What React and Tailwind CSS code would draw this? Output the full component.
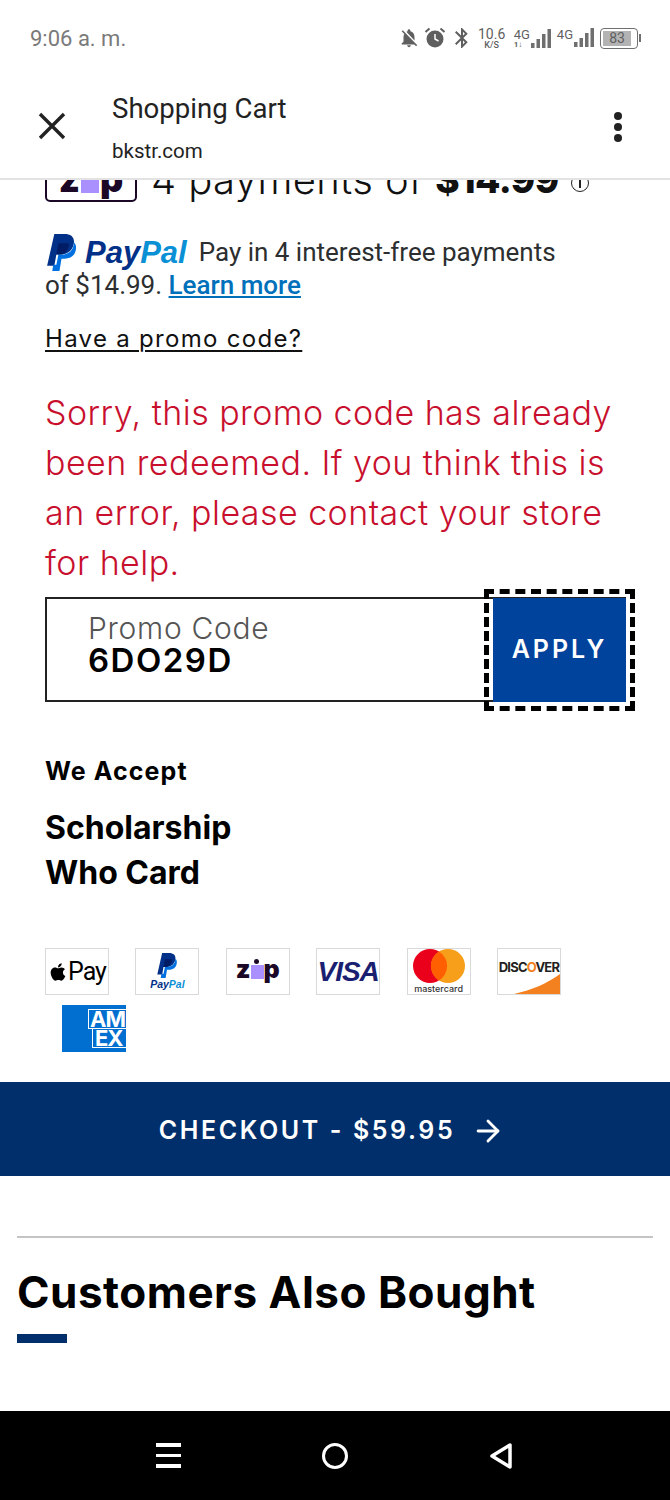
import { MdNotificationsOff, MdBluetooth } from 'react-icons/md';
import { FaApple } from 'react-icons/fa';
import { ArrowRight } from 'lucide-react';

const PayPalMark = ({ className }) => (
  <svg className={className} viewBox="0 0 28 36">
    <path fill="#003087" d="M7 0h10c6 0 10 3 9 9-1 7-6 11-13 11H9L7 31H0z" />
    <path fill="#0070e0" d="M26 8c2 2 2.500 4 2 7-1 6-5 9-11 9h-3l-2 12H5l1-6h3l2-10h3c7 0 12-4 12-12z" />
    <path fill="#001c64" d="M9 20l2-11h10c1 4-3 11-8 11z" />
  </svg>
);

const Bars = () => (
  <svg width="20" height="20" viewBox="0 0 20 20" fill="#6f6f6f">
    <rect x="0" y="14" width="3.500" height="5" />
    <rect x="5.500" y="10" width="3.500" height="9" />
    <rect x="11" y="5" width="3.500" height="14" />
    <rect x="16.500" y="0" width="3.500" height="19" />
  </svg>
);

const StatusBar = () => (
  <div className="h-[76px] flex items-center justify-between pl-[30px] pr-[29px] text-[#7a7a7a] font-['Roboto',sans-serif]">
    <span className="text-[22px]">9:06 a. m.</span>
    <div className="flex items-center text-[#5f5f5f]">
      <MdNotificationsOff className="text-[22px] mr-[4px]" />
      <svg width="22" height="22" viewBox="0 0 22 22" className="mr-[4px]">
        <circle cx="11" cy="12" r="8.500" fill="#5f5f5f" />
        <path d="M11 7v5l3.500 2" stroke="#fff" strokeWidth="1.500" fill="none" />
        <path d="M1.500 5l4-3.500M20.500 5l-4-3.500" stroke="#5f5f5f" strokeWidth="2" />
      </svg>
      <MdBluetooth className="text-[24px] mr-[4px]" />
      <div className="flex flex-col items-center w-[28px] leading-none mr-[8px]">
        <span className="text-[14px]">10.6</span>
        <span className="text-[9px] font-medium">K/S</span>
      </div>
      <div className="flex items-end mr-[6px]">
        <div className="flex flex-col leading-none text-[13px] mr-[1px]">
          <span>4G</span>
          <span className="text-[8px] font-bold">1↓</span>
        </div>
        <Bars />
      </div>
      <div className="flex items-end mr-[6px]">
        <span className="text-[13px] leading-none self-start mr-[1px]">4G</span>
        <Bars />
      </div>
      <div className="w-[38px] h-[21px] border-[1.500px] border-[#6f6f6f] rounded-[4px] p-[2px]">
        <div className="h-full w-[28px] bg-[#b3b3b3] flex items-center justify-center text-[14px] leading-none">
          83
        </div>
      </div>
      <div className="w-[2px] h-[8px] bg-[#6f6f6f] ml-[1px]" />
    </div>
  </div>
);

const Header = () => (
  <div className="h-[104px] flex items-center border-b-2 border-[#e3e3e3] font-['Roboto',sans-serif] text-[#222]">
    <svg width="28" height="28" viewBox="0 0 28 28" className="ml-[38px] mr-[46px] mt-[-2px] shrink-0" stroke="#222" strokeWidth="3.400">
      <path d="M2 2l24 24M26 2L2 26" />
    </svg>
    <div className="flex flex-col flex-1 mt-[1px]">
      <span className="text-[27.600px] leading-[34px]">Shopping Cart</span>
      <span className="text-[20.500px] leading-[26px] mt-[12px]">bkstr.com</span>
    </div>
    <div className="flex flex-col gap-[3px] mr-[48px]">
      <div className="w-[8px] h-[8px] rounded-full bg-[#222]" />
      <div className="w-[8px] h-[8px] rounded-full bg-[#222]" />
      <div className="w-[8px] h-[8px] rounded-full bg-[#222]" />
    </div>
  </div>
);

const ZipRow = () => (
  <div className="h-[22px] overflow-hidden flex items-end pl-[45px] font-['Inter',sans-serif]">
    <div className="w-[92px] h-[40px] border-2 border-[#1a0826] rounded-[5px] flex items-center justify-center shrink-0 text-[36px] font-black leading-none text-[#1a0826]">
      <span className="relative top-[-3px]">z</span>
      <span className="w-[18px] h-[22px] bg-[#aa8fff] mx-[1px]" />
      <span className="relative top-[-3px]">p</span>
    </div>
    <div className="h-[50px] ml-[14px] flex items-center text-[40px] font-light tracking-[0.400px] text-[#111] whitespace-nowrap leading-[50px] relative top-[3px]">
      4 payments of <span className="font-extrabold text-[37px] tracking-[-0.500px] ml-[12px]">$14.99</span>
    </div>
    <div className="w-[18px] h-[18px] rounded-full border border-[#222] ml-[12px] mb-[10px] shrink-0 flex items-center justify-center">
      <div className="w-[2px] h-[9px] bg-[#222]" />
    </div>
  </div>
);

const PayPalPromo = () => (
  <div className="pl-[45px] pt-[31px] font-['Roboto',sans-serif] text-[26px] leading-[34px] text-[#2c2e2f]">
    <div className="flex items-center h-[38px]">
      <PayPalMark className="w-[29px] h-[37px] ml-[2px] mr-[9px] shrink-0" />
      <span className="font-['Liberation_Sans',sans-serif] font-bold italic text-[31px] leading-none text-[#003087] mr-[12px]">
        Pay<span className="text-[#0a90d4]">Pal</span>
      </span>
      <span>Pay in 4 interest-free payments</span>
    </div>
    <div className="mt-[-3px]">
      of $14.99. <span className="text-[#0070ba] font-medium underline underline-offset-2">Learn more</span>
    </div>
  </div>
);

const PromoForm = () => (
  <div className="font-['Inter',sans-serif]">
    <div className="pl-[45px] pt-[22px] text-[24px] tracking-[1.300px] leading-[30px] text-[#111] underline underline-offset-[3px]">
      Have a promo code?
    </div>
    <p className="pl-[45px] pr-[40px] pt-[34px] text-[34px] tracking-[0.450px] font-light leading-[50px] text-[#c8102e]">
      Sorry, this promo code has already been redeemed. If you think this is an error, please contact your store for help.
    </p>
    <div className="flex ml-[45px] mr-[44px] mt-[9px] h-[105px] border-2 border-[#222] border-r-0">
      <div className="flex-1 flex flex-col pl-[41px] pt-[14px]">
        <span className="text-[30px] tracking-[0.700px] font-light leading-[30px] text-[#555]">Promo Code</span>
        <span className="text-[33px] tracking-[1.500px] font-semibold leading-[34px] text-black">6DO29D</span>
      </div>
      <div className="w-[133px] bg-[#00439c] mt-[-1px] mb-[-2px] flex items-center justify-center text-white text-[25px] font-semibold tracking-[3px] outline-[5px] outline-dashed outline-black outline-offset-[4px]">
        APPLY
      </div>
    </div>
  </div>
);

const Card = ({ children, className = '' }) => (
  <div className={`w-[64px] h-[47px] border border-[#d9d9d9] flex items-center justify-center overflow-hidden ${className}`}>
    {children}
  </div>
);

const PaymentCards = () => (
  <div className="flex flex-wrap pl-[45px] pr-[80px] gap-x-[26.400px] gap-y-[10px] mt-[53px]">
    <Card>
      <FaApple className="text-[20px] text-black shrink-0" />
      <span className="text-[25px] font-['Roboto',sans-serif] leading-none tracking-[-1px] text-black">Pay</span>
    </Card>
    <Card className="flex-col">
      <PayPalMark className="w-[20px] h-[25px]" />
      <span className="font-['Liberation_Sans',sans-serif] font-bold italic text-[10.500px] leading-[12px] text-[#003087]">
        Pay<span className="text-[#0a90d4]">Pal</span>
      </span>
    </Card>
    <Card>
      <div className="flex items-center text-[25px] font-black leading-none text-[#1a0826] font-['Inter',sans-serif]">
        <span className="relative top-[-2px]">z</span>
        <span className="w-[13px] h-[14px] bg-[#aa8fff] relative">
          <span className="absolute left-[3px] top-[-6px] w-[5px] h-[5px] rounded-full bg-[#1a0826]" />
        </span>
        <span className="relative top-[-2px]">p</span>
      </div>
    </Card>
    <Card>
      <span className="font-['Liberation_Sans',sans-serif] font-bold italic text-[28px] leading-none tracking-[-1px] text-[#1a1f71]">
        VISA
      </span>
    </Card>
    <Card className="flex-col justify-start">
      <svg width="52" height="34" viewBox="0 0 52 34" className="shrink-0">
        <circle cx="17" cy="17" r="17" fill="#eb001b" />
        <circle cx="35" cy="17" r="17" fill="#f79e1b" />
        <path d="M26 2.500a17 17 0 0 1 0 29a17 17 0 0 1 0-29z" fill="#ff5f00" />
      </svg>
      <span className="text-[9px] leading-[11px] font-['Inter',sans-serif] font-medium text-[#333]">mastercard</span>
    </Card>
    <Card className="relative">
      <svg className="absolute right-0 bottom-0" width="46" height="20" viewBox="0 0 46 20">
        <path d="M0 20C18 16 34 9 46 0v20z" fill="#f48120" />
      </svg>
      <span className="text-[13px] font-bold tracking-[-0.800px] leading-none font-['Inter',sans-serif] text-[#231f20] mb-[9px] relative">
        DISC<span className="text-[#f48120]">O</span>VER
      </span>
    </Card>
    <div className="w-[64px] h-[47px] ml-[17px] bg-[#016fd0] overflow-hidden flex flex-col items-end justify-center text-white font-['Inter',sans-serif] font-bold text-[22px] leading-[18px] tracking-[-1px]">
      <span className="border border-white border-r-0 pl-[1px] w-[38px] whitespace-nowrap">AM</span>
      <span className="border border-white border-r-0 border-t-0 pl-[2px] w-[34px] whitespace-nowrap">EX</span>
    </div>
  </div>
);

export default function App() {
  return (
    <div className="w-[670px] h-[1500px] bg-white flex flex-col overflow-hidden">
      <StatusBar />
      <Header />
      <ZipRow />
      <PayPalPromo />
      <PromoForm />

      <div className="font-['Inter',sans-serif] text-black">
        <div className="pl-[45px] mt-[53px] text-[25px] tracking-[1.100px] font-bold leading-[32px]">We Accept</div>
        <div className="pl-[45px] mt-[18px] text-[32px] font-bold leading-[45px]">
          <div>Scholarship</div>
          <div>Who Card</div>
        </div>
      </div>

      <PaymentCards />

      <div className="h-[94px] mt-[30px] shrink-0 bg-[#002f6c] flex items-center justify-center pt-[4px] pr-[6px] text-white font-['Inter',sans-serif] text-[25px] font-semibold tracking-[2.600px]">
        CHECKOUT - $59.95
        <ArrowRight className="w-[34px] h-[34px] ml-[16px]" strokeWidth={2} />
      </div>

      <div className="mx-[17px] mt-[60px] border-t-2 border-[#c4c4c4]" />
      <h2 className="pl-[17px] mt-[26px] text-[44px] tracking-[0.500px] font-bold leading-[56px] text-black font-['Inter',sans-serif]">
        Customers Also Bought
      </h2>
      <div className="ml-[17px] mt-[14px] w-[50px] h-[9px] bg-[#002f6c]" />

      <div className="mt-auto h-[89px] bg-black flex items-center justify-between pl-[156px] pr-[157px]">
        <div className="flex flex-col gap-[7px]">
          <div className="w-[25px] h-[3.500px] bg-white" />
          <div className="w-[25px] h-[3.500px] bg-white" />
          <div className="w-[25px] h-[3.500px] bg-white" />
        </div>
        <div className="w-[26px] h-[26px] rounded-full border-[3.500px] border-white" />
        <svg width="24" height="28" viewBox="0 0 24 28" fill="none" stroke="#fff" strokeWidth="3.500" strokeLinejoin="round">
          <path d="M21 3v22L3 14z" />
        </svg>
      </div>
    </div>
  );
}
